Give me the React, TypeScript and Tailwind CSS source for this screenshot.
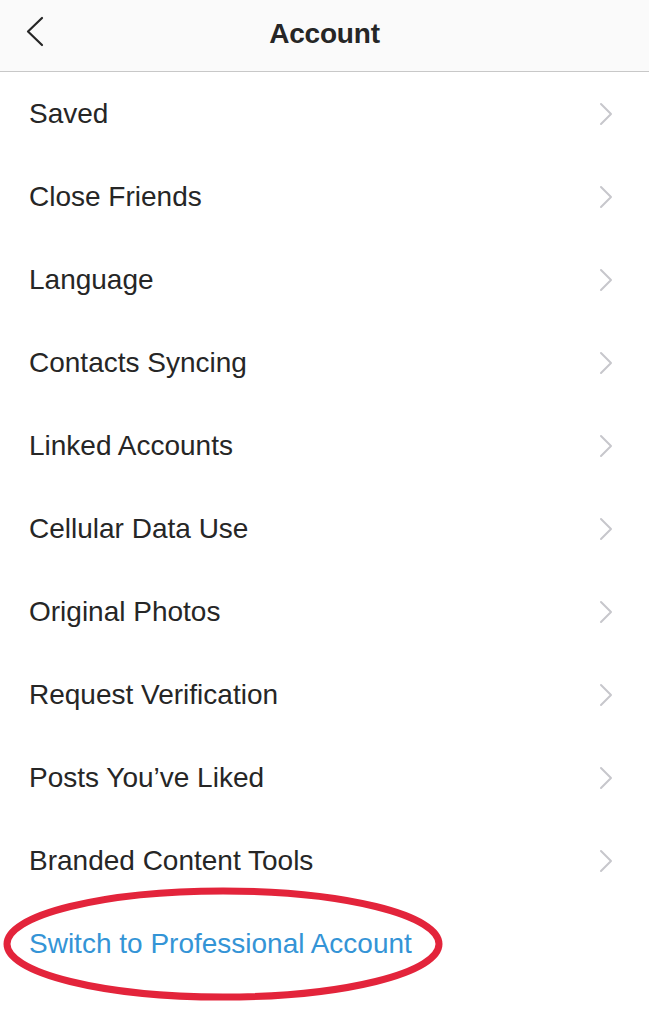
import React from "react";

const items = [
  "Saved",
  "Close Friends",
  "Language",
  "Contacts Syncing",
  "Linked Accounts",
  "Cellular Data Use",
  "Original Photos",
  "Request Verification",
  "Posts You’ve Liked",
  "Branded Content Tools",
];

function Chevron() {
  return (
    <svg width="14" height="24" viewBox="0 0 14 24" fill="none">
      <path d="M2 2l10 10-10 10" stroke="#c7c7cc" strokeWidth="2" strokeLinecap="round" strokeLinejoin="round" />
    </svg>
  );
}

export default function App() {
  return (
    <div className="min-h-screen w-[649px] bg-white font-['Liberation_Sans',Arial,sans-serif] text-[#262626]">
      {/* header */}
      <div className="relative flex h-[72px] items-center justify-center border-b border-[#c8c8c8] bg-[#fafafa] pb-[4px]">
        <svg className="absolute left-[25px] top-[16px]" width="21" height="31" viewBox="0 0 21 31" fill="none">
          <path d="M17 2L3 15.5 17 29" stroke="#262626" strokeWidth="2.2" strokeLinecap="round" strokeLinejoin="round" />
        </svg>
        <div className="text-[28px] font-bold tracking-[-0.2px]">Account</div>
      </div>

      <ul>
        {items.map((label) => (
          <li key={label} className="flex h-[83px] items-center justify-between pl-[29px] pr-[36px]">
            <span className="text-[28px]">{label}</span>
            <Chevron />
          </li>
        ))}
        <li className="relative flex h-[83px] items-center pl-[29px]">
          <span className="text-[28px] text-[#3494d6]">Switch to Professional Account</span>
          {/* red circle annotation */}
          <svg className="absolute left-0 top-[-18px]" width="450" height="120" viewBox="0 0 450 120" fill="none">
            <ellipse cx="223" cy="60" rx="216" ry="53" stroke="#e3243b" strokeWidth="7" />
          </svg>
        </li>
      </ul>
    </div>
  );
}
